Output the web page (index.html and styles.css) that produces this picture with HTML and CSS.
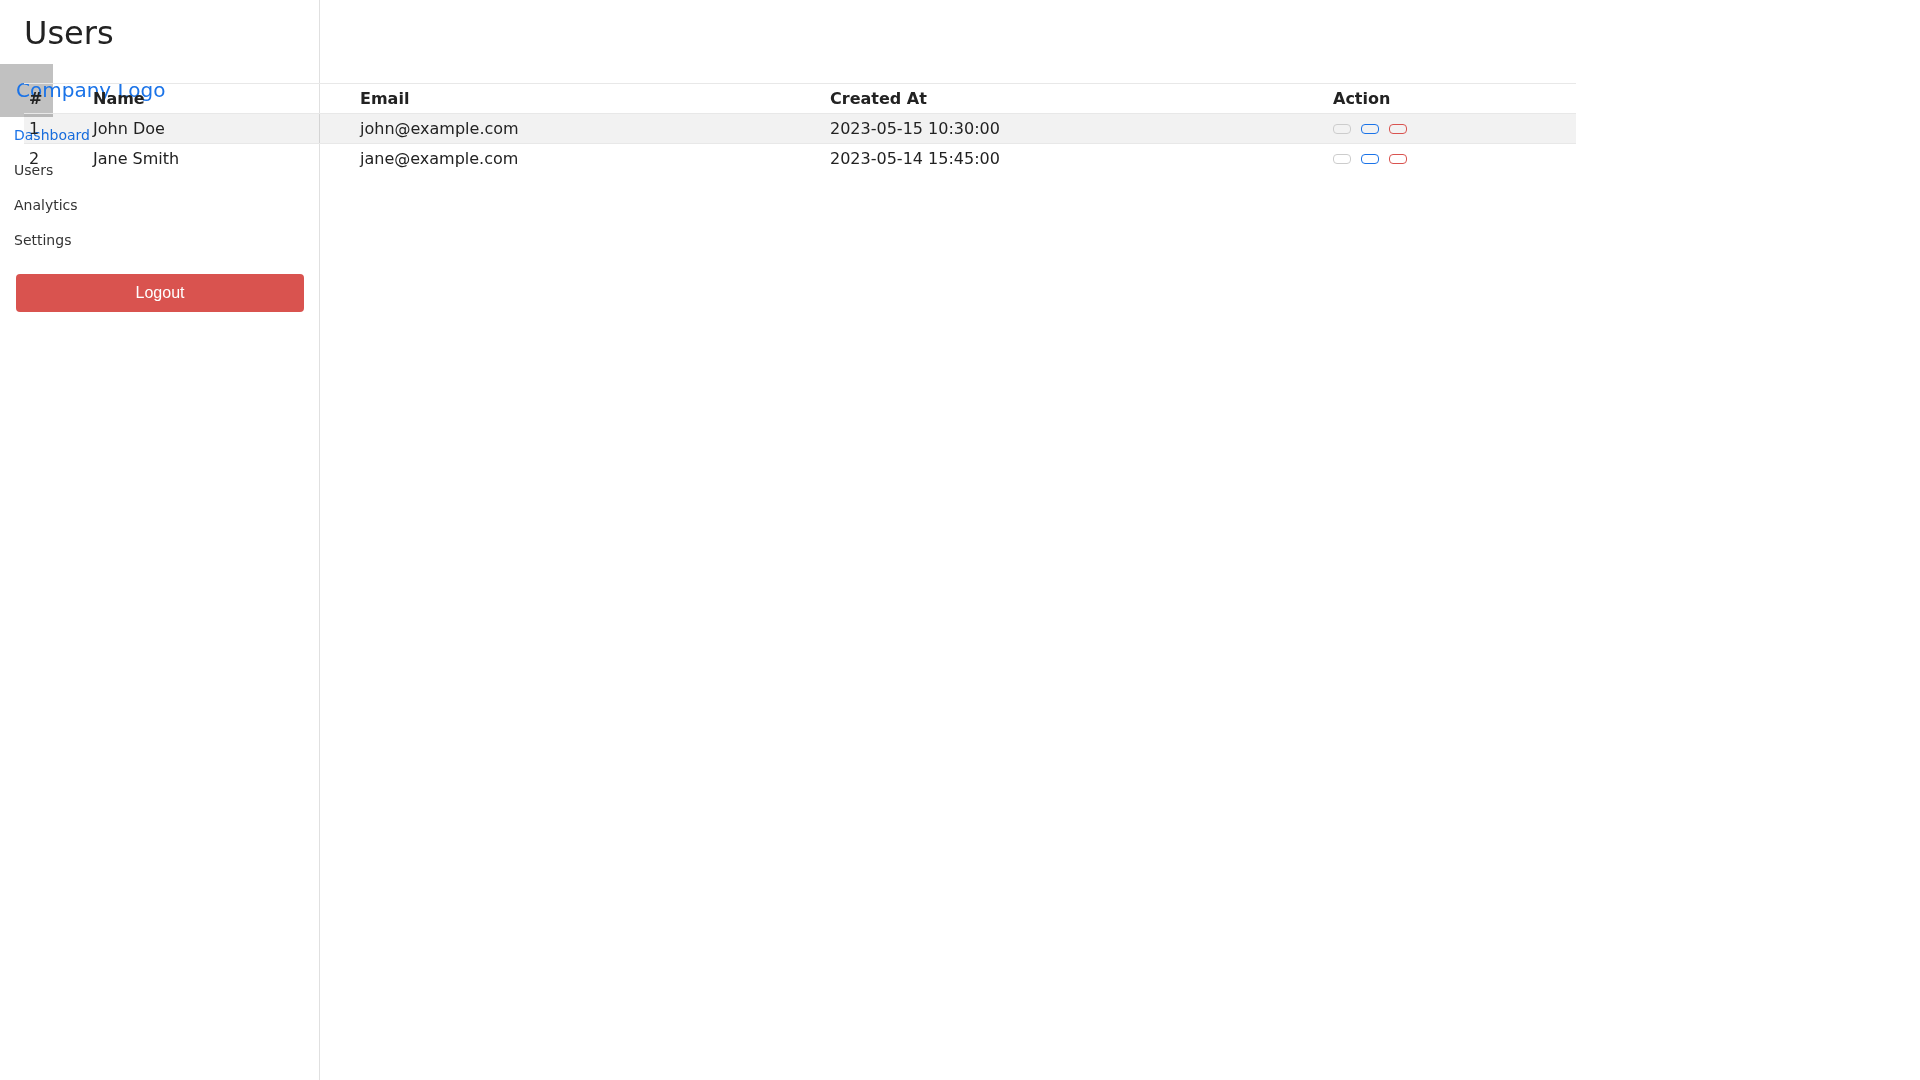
FILE: index.html
```html
<!DOCTYPE html>
<html lang="en">

<head>
    <meta charset="UTF-8">
    <meta name="viewport" content="width=device-width, initial-scale=1.0">
    <title>Users</title>
    <link rel="stylesheet" href="styles.css">
</head>

<body>
    <aside class="sidebar">
        <div class="logo">
            <span class="logo-img"></span>
            <a href="#" class="logo-text">Company Logo</a>
        </div>
        <nav class="nav">
            <a href="#" class="active">Dashboard</a>
            <a href="#">Users</a>
            <a href="#">Analytics</a>
            <a href="#">Settings</a>
        </nav>
        <button class="logout">Logout</button>
    </aside>

    <main class="main">
        <h1>Users</h1>
        <table class="users">
            <colgroup>
                <col class="col-id">
                <col class="col-name">
                <col class="col-email">
                <col class="col-date">
                <col class="col-action">
            </colgroup>
            <thead>
                <tr>
                    <th>#</th>
                    <th>Name</th>
                    <th>Email</th>
                    <th>Created At</th>
                    <th>Action</th>
                </tr>
            </thead>
            <tbody>
                <tr class="hl">
                    <td>1</td>
                    <td>John Doe</td>
                    <td>john@example.com</td>
                    <td>2023-05-15 10:30:00</td>
                    <td>
                        <div class="actions">
                            <button class="btn btn-view"></button>
                            <button class="btn btn-edit"></button>
                            <button class="btn btn-delete"></button>
                        </div>
                    </td>
                </tr>
                <tr>
                    <td>2</td>
                    <td>Jane Smith</td>
                    <td>jane@example.com</td>
                    <td>2023-05-14 15:45:00</td>
                    <td>
                        <div class="actions">
                            <button class="btn btn-view"></button>
                            <button class="btn btn-edit"></button>
                            <button class="btn btn-delete"></button>
                        </div>
                    </td>
                </tr>
            </tbody>
        </table>
    </main>
</body>

</html>
```

FILE: styles.css
```css
body {
    margin: 0;
    font-family: "DejaVu Sans", sans-serif;
    color: #222;
    background: #fff;
}

/* sidebar sits under the page content */
.sidebar {
    position: fixed;
    top: 0;
    left: 0;
    width: 320px;
    height: 100vh;
    box-sizing: border-box;
    padding: 64px 15px 0 16px;
    border-right: 1px solid #e0e0e0;
}

.logo {
    position: relative;
    display: flex;
    align-items: center;
    height: 53px;
}

.logo-img {
    position: absolute;
    left: -16px;
    top: 0;
    width: 53px;
    height: 53px;
    background-color: #c1c1c1;
}

.logo-text {
    position: relative;
    font-size: 20px;
    line-height: 23px;
    color: #1a73e8;
    text-decoration: none;
}

.nav {
    margin: 1px -3px 0 -2px;
}

.nav a {
    display: block;
    padding: 9px 0;
    font-size: 14px;
    line-height: 17px;
    color: #333;
    text-decoration: none;
}

.nav a.active {
    color: #1a73e8;
}

.logout {
    display: block;
    width: 100%;
    margin-top: 16px;
    padding: 10px 0;
    font-family: "Liberation Sans", Arial, sans-serif;
    font-size: 16px;
    line-height: 18px;
    color: #fff;
    background-color: #d9534f;
    border: none;
    border-radius: 4px;
    cursor: pointer;
}

.main {
    position: relative;
    z-index: 1;
    max-width: 1600px;
    box-sizing: border-box;
    padding: 15px 24px;
}

h1 {
    margin: 0 0 31px;
    font-size: 32px;
    line-height: 37px;
    font-weight: normal;
    color: #222;
}

.users {
    width: 100%;
    table-layout: fixed;
    border-collapse: collapse;
    font-size: 16px;
}

.col-id { width: 64px; }
.col-name { width: 267px; }
.col-email { width: 470px; }
.col-date { width: 503px; }
.col-action { width: 248px; }

.users th,
.users td {
    padding: 5px 4px 5px 5px;
    line-height: 19px;
    text-align: left;
    border-top: 1px solid #e8e8e8;
}

.users th {
    font-weight: bold;
    color: #222;
}

.users tr.hl {
    background-color: rgba(0, 0, 0, 0.05);
}

.actions {
    display: flex;
    align-items: center;
    gap: 10px;
    height: 19px;
}

.btn {
    width: 18px;
    height: 10px;
    padding: 0;
    background: transparent;
    border: 1px solid #ccc;
    border-radius: 4px;
    cursor: pointer;
}

.btn-edit {
    border-color: #1a73e8;
}

.btn-delete {
    border-color: #d9534f;
}
```
